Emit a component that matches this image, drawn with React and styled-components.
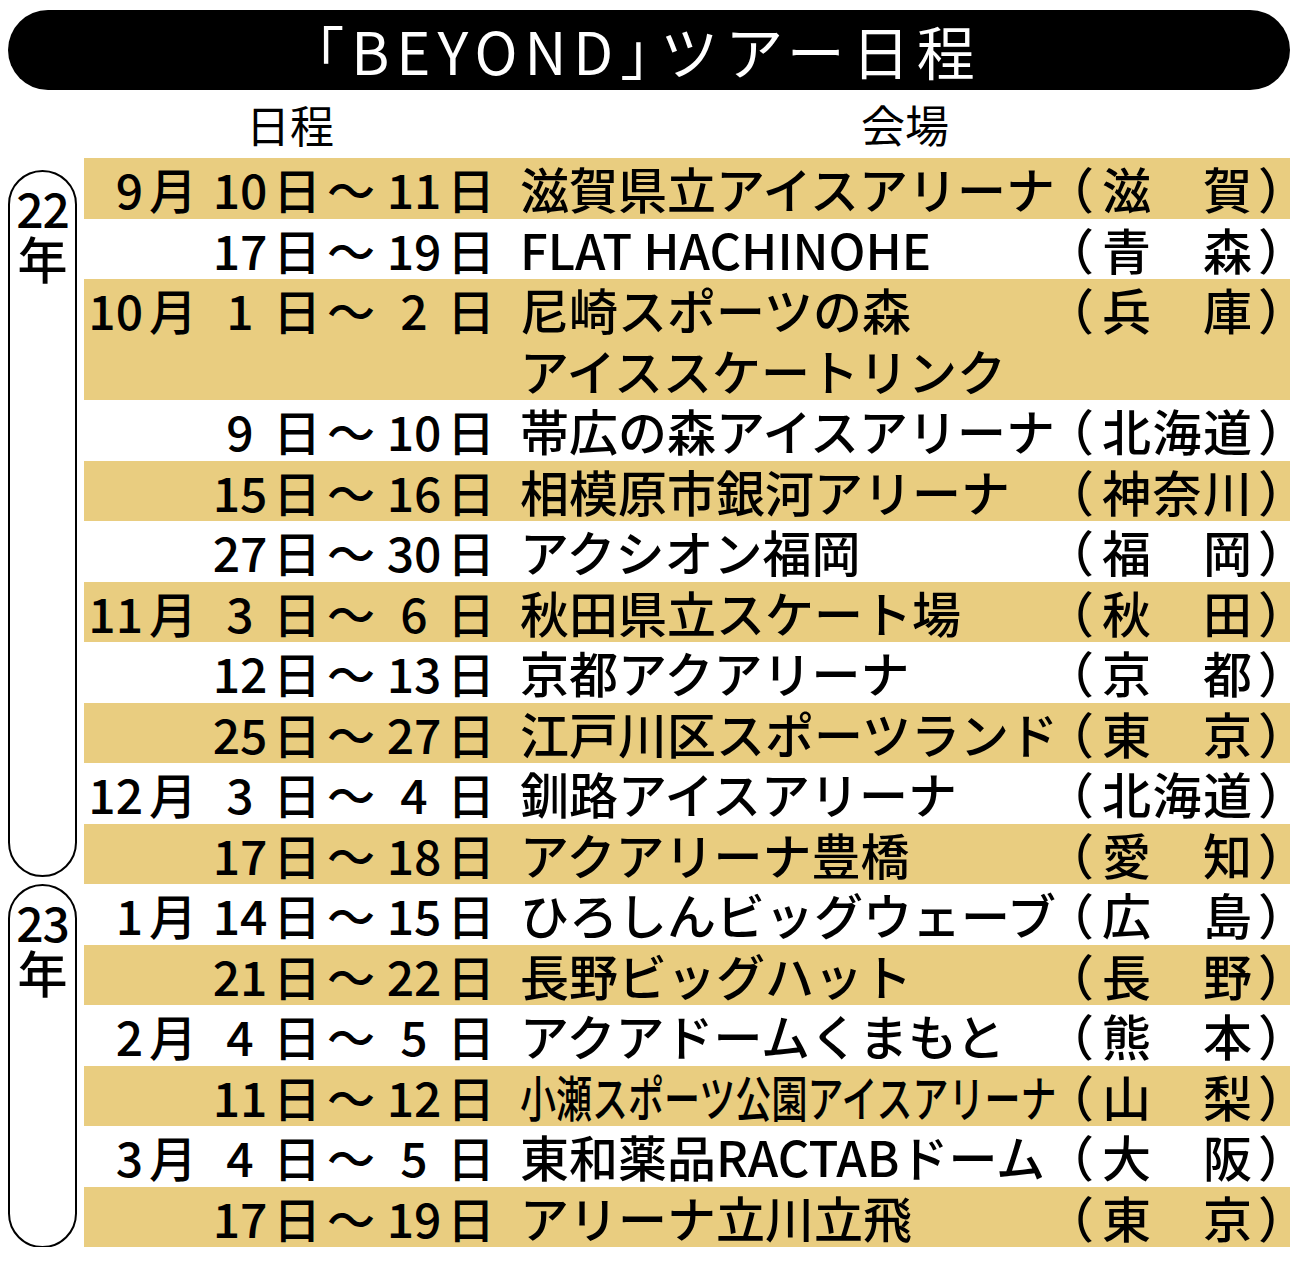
import React from "react";
import styled, { createGlobalStyle } from "styled-components";

const Global = createGlobalStyle`
  html, body { margin: 0; padding: 0; background: #fff; }
  body { font-family: "Noto Sans CJK JP", "Noto Sans", sans-serif; color: #000; }
`;

const Page = styled.div`
  width: 1300px;
  box-sizing: border-box;
  padding: 10px 10px 0 8px;
`;

const TitleBar = styled.h1`
  margin: 0;
  height: 80px;
  box-sizing: border-box;
  padding-right: 30px;
  border-radius: 40px;
  background: #000;
  color: #fff;
  display: flex;
  align-items: center;
  justify-content: center;
  font-size: 58px;
  font-weight: 400;
  letter-spacing: 7px;
  line-height: 1;
  white-space: nowrap;
`;

const Latin = styled.span`
  letter-spacing: 7px;
`;

const CloseBracket = styled.span`
  font-feature-settings: "halt";
  margin-right: 4px;
`;

const Table = styled.div`
  display: grid;
  grid-template-columns: 69px minmax(0, 1fr);
  column-gap: 7px;
`;

const HeaderRow = styled.div`
  grid-column: 2;
  grid-row: 1;
  height: 68px;
  display: grid;
  grid-template-columns: 412px minmax(0, 1fr);
  column-gap: 24px;
  align-items: center;
  font-size: 44px;
  font-weight: 400;
  line-height: 1;
`;

const HeaderCell = styled.div`
  text-align: center;
`;

const YearPill = styled.div`
  grid-column: 1;
  grid-row: ${(p) => p.$start} / span ${(p) => p.$span};
  margin: ${(p) => p.$mt}px 0 ${(p) => p.$mb}px;
  border: 2.5px solid #000;
  border-radius: 35px;
  display: flex;
  flex-direction: column;
  align-items: center;
  padding-top: 10px;
  font-weight: 500;
`;

const YearNum = styled.span`
  display: block;
  height: 50px;
  line-height: 50px;
  font-size: 48px;
  letter-spacing: -1px;
`;

const YearKanji = styled.span`
  display: block;
  height: 50px;
  line-height: 50px;
  font-size: 50px;
`;

const Row = styled.div`
  grid-column: 2;
  grid-row: ${(p) => p.$row};
  min-width: 0;
  display: flex;
  align-items: flex-start;
  background: ${(p) => (p.$shade ? "#E9CD80" : "#fff")};
  line-height: 60.5px;
  font-weight: 500;
`;

const DateCells = styled.div`
  flex: none;
  width: 412px;
  display: grid;
  grid-template-columns: 62px 54px 74px 46px 62px 64px 50px;
  font-size: 48px;
`;

const Cell = styled.span`
  display: flex;
  justify-content: ${(p) => p.$justify || "center"};
  padding-right: ${(p) => p.$pr || 0}px;
  padding-left: ${(p) => p.$pl || 0}px;
  white-space: nowrap;
`;

const Venue = styled.div`
  flex: 1;
  min-width: 0;
  margin-left: 24px;
  font-size: 49px;
`;

const VenueLine = styled.div`
  white-space: nowrap;
  transform-origin: left center;
  transform: ${(p) => (p.$squeeze ? `scaleX(${p.$squeeze})` : "none")};
`;

const Pref = styled.div`
  flex: none;
  width: 236px;
  display: flex;
  font-size: 49px;
`;

const Paren = styled.span`
  flex: none;
  display: flex;
  justify-content: ${(p) => (p.$open ? "flex-end" : "flex-start")};
  width: ${(p) => p.$w}px;
  padding: 0 ${(p) => p.$pr || 0}px 0 ${(p) => p.$pl || 0}px;
  box-sizing: border-box;
  white-space: nowrap;
  font-feature-settings: "halt";
`;

const PrefName = styled.span`
  flex: none;
  width: 150px;
  display: flex;
  justify-content: space-between;
`;

const rows = [
  ["9", "10", "11", ["滋賀県立アイスアリーナ"], "滋賀"],
  ["", "17", "19", ["FLAT HACHINOHE"], "青森"],
  ["10", "1", "2", ["尼崎スポーツの森", "アイススケートリンク"], "兵庫"],
  ["", "9", "10", ["帯広の森アイスアリーナ"], "北海道"],
  ["", "15", "16", ["相模原市銀河アリーナ"], "神奈川"],
  ["", "27", "30", ["アクシオン福岡"], "福岡"],
  ["11", "3", "6", ["秋田県立スケート場"], "秋田"],
  ["", "12", "13", ["京都アクアリーナ"], "京都"],
  ["", "25", "27", ["江戸川区スポーツランド"], "東京"],
  ["12", "3", "4", ["釧路アイスアリーナ"], "北海道"],
  ["", "17", "18", ["アクアリーナ豊橋"], "愛知"],
  ["1", "14", "15", ["ひろしんビッグウェーブ"], "広島"],
  ["", "21", "22", ["長野ビッグハット"], "長野"],
  ["2", "4", "5", ["アクアドームくまもと"], "熊本"],
  ["", "11", "12", ["小瀬スポーツ公園アイスアリーナ"], "山梨", 0.735],
  ["3", "4", "5", ["東和薬品RACTABドーム"], "大阪"],
  ["", "17", "19", ["アリーナ立川立飛"], "東京"],
];

export default function App() {
  return (
    <>
      <Global />
      <Page>
        <TitleBar>
          「<Latin>BEYOND</Latin><CloseBracket>」</CloseBracket>ツアー日程
        </TitleBar>
        <Table>
          <HeaderRow>
            <HeaderCell>日程</HeaderCell>
            <HeaderCell>会場</HeaderCell>
          </HeaderRow>
          <YearPill $start={2} $span={11} $mt={12} $mb={7}>
            <YearNum>22</YearNum>
            <YearKanji>年</YearKanji>
          </YearPill>
          <YearPill $start={13} $span={6} $mt={0} $mb={-1}>
            <YearNum>23</YearNum>
            <YearKanji>年</YearKanji>
          </YearPill>
          {rows.map(([m, s, e, venue, pref, squeeze], i) => (
            <Row key={i} $row={i + 2} $shade={i % 2 === 0}>
              <DateCells>
                <Cell $justify="flex-end" $pr={3}>{m}</Cell>
                <Cell>{m ? "月" : ""}</Cell>
                <Cell $pl={6}>{s}</Cell>
                <Cell>日</Cell>
                <Cell>～</Cell>
                <Cell>{e}</Cell>
                <Cell>日</Cell>
              </DateCells>
              <Venue>
                {venue.map((v) => (
                  <VenueLine key={v} $squeeze={squeeze}>{v}</VenueLine>
                ))}
              </Venue>
              <Pref>
                <Paren $open $w={48} $pr={8}>（</Paren>
                <PrefName>
                  {pref.split("").map((c, j) => (
                    <span key={j}>{c}</span>
                  ))}
                </PrefName>
                <Paren $w={38} $pl={6}>）</Paren>
              </Pref>
            </Row>
          ))}
        </Table>
      </Page>
    </>
  );
}
